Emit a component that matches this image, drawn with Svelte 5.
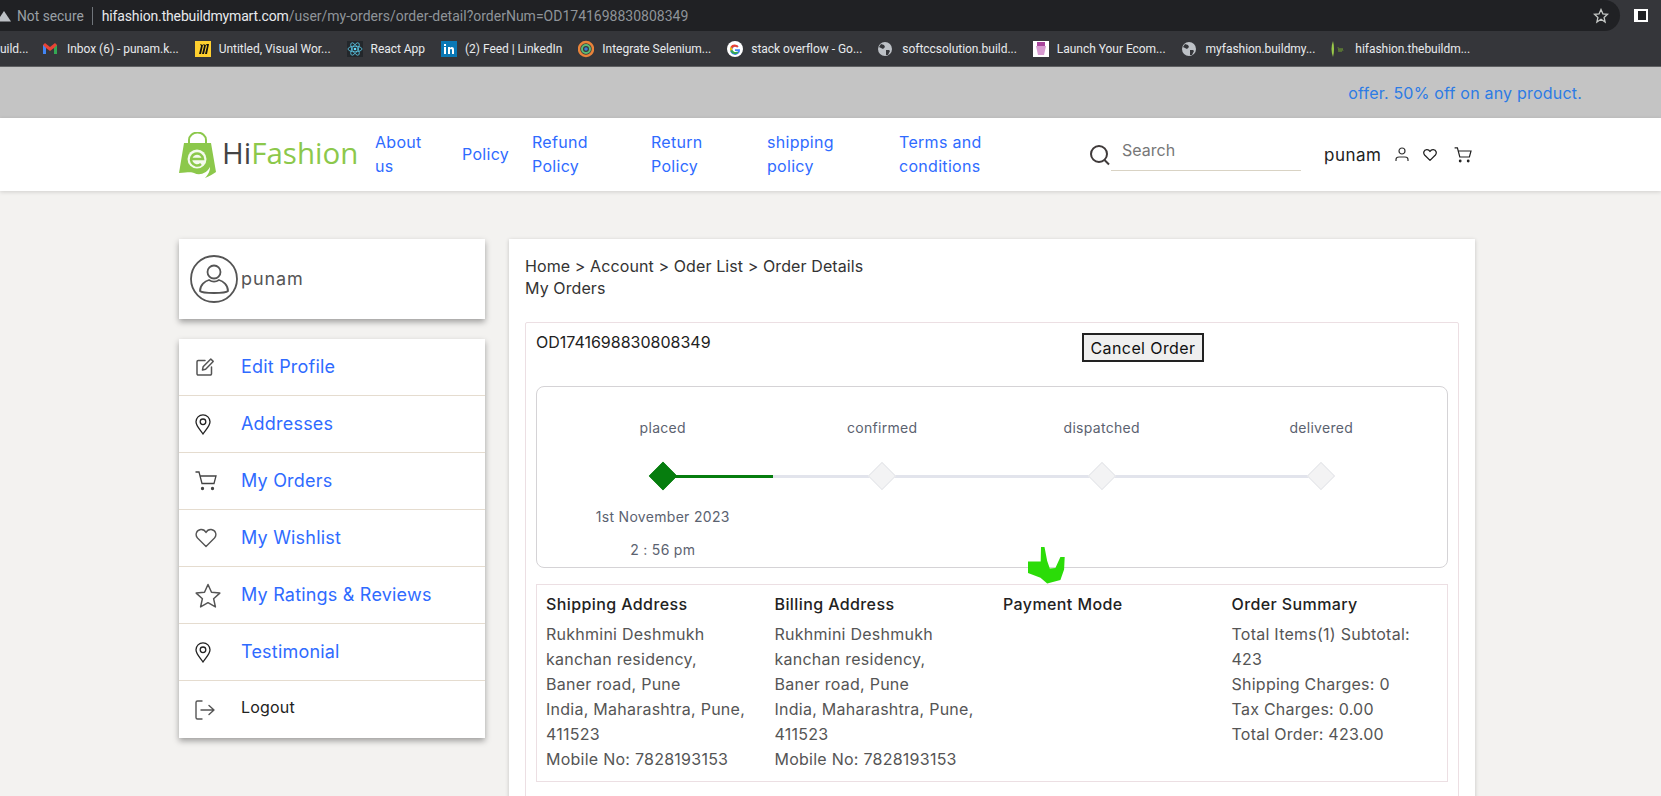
<script>
  const bookmarks = [
    { label: "uild...", icon: "none" },
    { label: "Inbox (6) - punam.k...", icon: "gmail" },
    { label: "Untitled, Visual Wor...", icon: "miro" },
    { label: "React App", icon: "react" },
    { label: "(2) Feed | LinkedIn", icon: "linkedin" },
    { label: "Integrate Selenium...", icon: "ring" },
    { label: "stack overflow - Go...", icon: "google" },
    { label: "softccsolution.build...", icon: "globe" },
    { label: "Launch Your Ecom...", icon: "shop" },
    { label: "myfashion.buildmy...", icon: "globe" },
    { label: "hifashion.thebuildm...", icon: "leaf" },
  ];

  // each entry is the lines of one nav link
  const navLinks = [["About", "us"], ["Policy"], ["Refund", "Policy"], ["Return", "Policy"], ["shipping", "policy"], ["Terms and", "conditions"]];

  const menu = [
    { label: "Edit Profile", icon: "edit" },
    { label: "Addresses", icon: "pin" },
    { label: "My Orders", icon: "cart" },
    { label: "My Wishlist", icon: "heart" },
    { label: "My Ratings & Reviews", icon: "star" },
    { label: "Testimonial", icon: "pin" },
    { label: "Logout", icon: "logout" },
  ];

  const steps = ["placed", "confirmed", "dispatched", "delivered"];

  const address = ["Rukhmini Deshmukh", "kanchan residency,", "Baner road, Pune", "India, Maharashtra, Pune,", "411523", "Mobile No: 7828193153"];
  const summary = ["Total Items(1) Subtotal:", "423", "Shipping Charges: 0", "Tax Charges: 0.00", "Total Order: 423.00"];

  const columns = [
    { title: "Shipping Address", lines: address },
    { title: "Billing Address", lines: address },
    { title: "Payment Mode", lines: [] },
    { title: "Order Summary", lines: summary },
  ];
</script>

{#snippet icon(name)}
  {#if name === "edit"}
    <svg width="20" height="20" viewBox="0 0 20 20" fill="none" stroke="#555" stroke-width="1.5" stroke-linejoin="round" stroke-linecap="round">
      <path d="M10 3.5H3.2A1.2 1.2 0 0 0 2 4.7v12.1A1.2 1.2 0 0 0 3.2 18h12.1a1.2 1.2 0 0 0 1.2-1.2V10" />
      <path d="M7.5 13l.6-3.2L15.800 2l2.400 2.400-7.600 7.900z" />
    </svg>
  {:else if name === "pin"}
    <svg width="16" height="21" viewBox="0 0 16 21" fill="none" stroke="#222" stroke-width="1.3">
      <path d="M8 20C5 15.500 1 12 1 7.800a7 7 0 0 1 14 0C15 12 11 15.500 8 20z" />
      <circle cx="8" cy="7.800" r="2.800" />
    </svg>
  {:else if name === "cart"}
    <svg width="22" height="20" viewBox="0 0 22 20" fill="none" stroke="#444" stroke-width="1.300">
      <path d="M0.500 1H4l3 11.500h12L21 5H5" />
      <circle cx="7.500" cy="17.500" r="1" fill="#444" />
      <circle cx="17.500" cy="17.500" r="1" fill="#444" />
    </svg>
  {:else if name === "heart"}
    <svg width="22" height="20" viewBox="0 0 22 20" fill="none" stroke="#555" stroke-width="1.400" stroke-linejoin="round">
      <path d="M11 18.500L2.500 10C0 7.200 1 2 5.800 1.500 8 1.300 10 2.500 11 4.500 12 2.500 14 1.300 16.200 1.500 21 2 22 7.200 19.500 10z" />
    </svg>
  {:else if name === "star"}
    <svg width="26" height="25" viewBox="0 0 26 25" fill="none" stroke="#555" stroke-width="1.500" stroke-linejoin="round">
      <path d="M13 1.500l3.500 7.700 8.300.9-6.200 5.600 1.800 8.200L13 19.700l-7.400 4.200 1.800-8.200L1.200 10.100l8.300-.9z" />
    </svg>
  {:else if name === "logout"}
    <svg width="20" height="20" viewBox="0 0 20 20" fill="none" stroke="#555" stroke-width="1.400" stroke-linecap="round" stroke-linejoin="round">
      <path d="M7 1H2.500A1.500 1.500 0 0 0 1 2.500v15A1.500 1.500 0 0 0 2.500 19H7" />
      <path d="M6 10h13M14 5.500L19 10l-5 4.500" />
    </svg>
  {/if}
{/snippet}

{#snippet favicon(name)}
  {#if name === "gmail"}
    <svg width="14" height="12" viewBox="0 0 14 12"><path d="M0 2v9h3V5l4 3 4-3v6h3V2L12 0 7 4 2 0z" fill="#ea4335" /><path d="M11 5v6h3V2z" fill="#34a853" /><path d="M0 2v9h3V5z" fill="#4285f4" /></svg>
  {:else if name === "miro"}
    <svg width="16" height="16" viewBox="0 0 16 16"><rect width="16" height="16" fill="#ffd02f" /><path d="M5 3l1 2-2 8h2l2-9zM8 3l1 2-2 8h2l2-9zM11 3l1 2-2 8h2l2-10z" fill="#111" /></svg>
  {:else if name === "react"}
    <svg width="16" height="16" viewBox="0 0 16 16"><rect width="16" height="16" fill="#23272b" /><g fill="none" stroke="#61dafb" stroke-width=".7"><ellipse cx="8" cy="8" rx="7" ry="2.800" /><ellipse cx="8" cy="8" rx="7" ry="2.800" transform="rotate(60 8 8)" /><ellipse cx="8" cy="8" rx="7" ry="2.800" transform="rotate(120 8 8)" /></g><circle cx="8" cy="8" r="1.300" fill="#61dafb" /></svg>
  {:else if name === "linkedin"}
    <svg width="16" height="16" viewBox="0 0 16 16"><rect width="16" height="16" fill="#0a78b5" /><path d="M3 6h2v7H3zM3 3h2v2H3zM7 6h2v1c1-1.500 4-1.500 4 1.500V13h-2V9c0-1.500-2-1.500-2 0v4H7z" fill="#fff" /></svg>
  {:else if name === "ring"}
    <svg width="16" height="18" viewBox="0 0 16 18"><circle cx="8" cy="9" r="7" fill="none" stroke="#e8833a" stroke-width="2.500" /><circle cx="8" cy="9" r="4" fill="none" stroke="#5bb974" stroke-width="2" /><circle cx="8" cy="9" r="1.800" fill="#3b7dd8" /></svg>
  {:else if name === "google"}
    <svg width="16" height="16" viewBox="0 0 16 16"><circle cx="8" cy="8" r="8" fill="#fff" /><path d="M13 8.200H8v1.800h3a3 3 0 1 1-.8-3.400l1.300-1.300A5 5 0 1 0 13 8.200z" fill="#4285f4" /><path d="M3.500 5.700A5 5 0 0 1 11.500 5.300l-1.300 1.300a3 3 0 0 0-4.900 1z" fill="#ea4335" /><path d="M3.500 5.700l1.800 1.900a3 3 0 0 0 0 1l-1.800 1.700a5 5 0 0 1 0-4.600z" fill="#fbbc05" /><path d="M3.500 10.300l1.800-1.700A3 3 0 0 0 10 10.500l1.500 1.200a5 5 0 0 1-8-1.400z" fill="#34a853" /></svg>
  {:else if name === "globe"}
    <svg width="14" height="14" viewBox="0 0 14 14"><circle cx="7" cy="7" r="7" fill="#bdc1c6" /><path d="M3 2l3 1 1 2-2 2-2-1-2-1zM8 8l3 0 1 1-2 4-2 0z" fill="#35363a" /></svg>
  {:else if name === "shop"}
    <svg width="16" height="16" viewBox="0 0 16 16"><rect width="16" height="16" fill="#fff" /><rect x="4" y="1" width="8" height="4" fill="#a8459c" /><path d="M3 5h10l-2 9H5z" fill="#d79ad0" /></svg>
  {:else if name === "leaf"}
    <svg width="16" height="18" viewBox="0 0 16 18"><path d="M2 1q-3 8 0 16 2-8 0-16z" fill="#9ccc4a" /><path d="M7 7l1 5 1-4 1 4 1-4 1 3" fill="none" stroke="#5c7a34" /></svg>
  {/if}
{/snippet}

<div class="page">
  <div class="chrome">
    <div class="addressRow">
      <div class="omnibox">
        <svg class="warn" width="12" height="12" viewBox="0 0 12 12"><path d="M4 1L11 11.500H-3z" fill="#bdc1c6" /></svg>
        <span class="notSecure">Not secure</span>
        <span class="sep"></span>
        <span class="host">hifashion.thebuildmymart.com</span><span class="path">/user/my-orders/order-detail?orderNum=OD1741698830808349</span>
        <svg class="bookmarkStar" width="16" height="16" viewBox="0 0 16 16" fill="none" stroke="#c4c7c5" stroke-width="1.300"><path d="M8 1.500l1.900 4.300 4.600.5-3.400 3.100 1 4.600L8 11.200l-4.100 2.800 1-4.600L1.500 6.300l4.600-.5z" /></svg>
      </div>
      <div class="sidePanel"><span></span></div>
    </div>
    <div class="bookmarks">
      {#each bookmarks as b}
        <div class="bookmark">
          {#if b.icon !== "none"}
            <span class="fav">{@render favicon(b.icon)}</span>
          {/if}
          <span>{b.label}</span>
        </div>
      {/each}
    </div>
  </div>

  <div class="offer">offer. 50% off on any product.</div>

  <header>
    <div class="logo">
      <svg width="37" height="46" viewBox="0 0 37 46">
        <path d="M10 13V8a8 7 0 0 1 17 0v5" fill="none" stroke="#8cc84b" stroke-width="2" />
        <path d="M5 11h27l5 29c-3 2-6 4-11 6 4-4 5-8 5-11-3 6-10 9-16 6-2-1-5-1-15 0z" fill="#8cc84b" />
        <circle cx="18" cy="27" r="9.500" fill="#fff" opacity=".9" />
        <path d="M12 27h12a6 6 0 1 0-2 5" fill="none" stroke="#8cc84b" stroke-width="2.500" />
      </svg>
      <div class="wordmark"><span class="hi">Hi</span><span class="fashion">Fashion</span></div>
    </div>
    <nav>
      {#each navLinks as link}
        <a href="#top">
          {#each link as part}
            <span>{part}</span>
          {/each}
        </a>
      {/each}
    </nav>
    <div class="search">
      <svg width="22" height="22" viewBox="0 0 22 22" fill="none" stroke="#3f3a3a" stroke-width="2"><circle cx="10" cy="10" r="8" /><path d="M15.500 16l4.500 4.500" /></svg>
      <span class="searchField">Search</span>
    </div>
    <div class="userBox">
      <span class="userName">punam</span>
      <svg width="14" height="15" viewBox="0 0 14 15" fill="none" stroke="#333" stroke-width="1.200"><circle cx="7" cy="4" r="3" /><path d="M1 14v-1.500Q1 10 4 10h6q3 0 3 2.500V14" /></svg>
      <svg width="14" height="14" viewBox="0 0 22 20" fill="none" stroke="#222" stroke-width="2" stroke-linejoin="round"><path d="M11 18.500L2.500 10C0 7.200 1 2 5.800 1.500 8 1.300 10 2.500 11 4.500 12 2.500 14 1.300 16.200 1.500 21 2 22 7.200 19.500 10z" /></svg>
      <svg class="userCart" width="18" height="16" viewBox="0 0 22 20" fill="none" stroke="#222" stroke-width="1.500"><path d="M0.500 1H4l3 11.500h12L21 5H5" /><circle cx="7.500" cy="17.500" r="1" fill="#222" /><circle cx="17.500" cy="17.500" r="1" fill="#222" /></svg>
    </div>
  </header>

  <main>
    <aside>
      <div class="card profile">
        <svg width="48" height="48" viewBox="0 0 48 48" fill="none" stroke="#555" stroke-width="1.800">
          <circle cx="24" cy="24" r="23" />
          <circle cx="24" cy="17" r="6.500" />
          <path d="M10 36c0-6 5-10 9-11 3 2 7 2 10 0 4 1 9 5 9 11-1 1-8 2-14 2s-13-1-14-2z" stroke-linejoin="round" />
        </svg>
        <span>punam</span>
      </div>
      <ul class="card menu">
        {#each menu as item}
          <li>
            <span class="menuIcon">{@render icon(item.icon)}</span>
            <a href="#top" class:logout={item.icon === "logout"}>{item.label}</a>
          </li>
        {/each}
      </ul>
    </aside>

    <section class="content">
      <div class="crumbs">Home &gt; Account &gt; Oder List &gt; Order Details</div>
      <div class="crumbs">My Orders</div>

      <div class="order">
        <div class="orderHead">
          <span class="orderNum">OD1741698830808349</span>
          <button>Cancel Order</button>
        </div>

        <div class="tracker">
          {#each steps as step, i}
            <div class="step">
              <div class="stepLabel">{step}</div>
              <div class="node">
                {#if i < steps.length - 1}
                  <span class="connector" class:started={i === 0}></span>
                {/if}
                <span class="diamond" class:done={i === 0}></span>
              </div>
              {#if i === 0}
                <div class="stepDate">1st November 2023</div>
                <div class="stepDate">2 : 56 pm</div>
              {/if}
            </div>
          {/each}
        </div>

        <div class="details">
          {#each columns as col}
            <div>
              <h4>{col.title}</h4>
              {#each col.lines as line}
                <div class="line">{line}</div>
              {/each}
            </div>
          {/each}
        </div>

        <svg class="scribble" width="40" height="40" viewBox="0 0 40 40">
          <path d="M13 0h3.500l2.700 14 2.600 7.500 5.600-.6 5-10.900h4.300l-.6 12.500-3.700 10.500-13.200 3.500-6.700-5.700L0 26V14.500h12.700z" fill="#2bdc08" />
        </svg>
      </div>
    </section>
  </main>
</div>

<style>
  :global(body) {
    margin: 0;
    background: #f3f2f0;
  }

  .page {
    height: 796px;
    overflow: hidden;
    font-family: Inter, "Liberation Sans", sans-serif;
    background: #f3f2f0;
  }

  .chrome {
    background: #35363a;
    border-bottom: 1px solid #5f6062;
    font-family: Roboto, "Liberation Sans", sans-serif;
  }

  .addressRow {
    height: 31px;
    display: flex;
  }

  .omnibox {
    flex: 1;
    background: #202124;
    border-radius: 0 16px 16px 0;
    display: flex;
    align-items: center;
    font-size: 14px;
    white-space: nowrap;
  }

  .warn {
    flex: none;
  }

  .notSecure {
    margin-left: 5px;
    color: #9aa0a6;
    font-size: 13.800px;
  }

  .sep {
    width: 1px;
    height: 18px;
    background: #70757a;
    margin: 0 9px 0 8px;
  }

  .host {
    color: #e8eaed;
    letter-spacing: -0.15px;
  }

  .path {
    color: #8f9499;
  }

  .bookmarkStar {
    margin-left: auto;
    margin-right: 11px;
  }

  .sidePanel {
    width: 41px;
    display: flex;
    align-items: center;
    justify-content: center;
  }

  .sidePanel span {
    width: 8px;
    height: 9px;
    border: 2px solid #fff;
    border-left-width: 4px;
    background: #202124;
  }

  .bookmarks {
    height: 35px;
    display: flex;
    align-items: center;
    gap: 16px;
    color: #e8eaed;
    font-size: 12px;
    letter-spacing: -0.03px;
    white-space: nowrap;
    overflow: hidden;
  }

  .bookmark {
    display: flex;
    align-items: center;
    gap: 8px;
  }

  .bookmark:first-child {
    width: 27px;
  }

  .fav {
    width: 16px;
    display: flex;
    align-items: center;
  }

  .offer {
    height: 51px;
    background: #c4c4c4;
    color: #2c7be5;
    font-size: 16px;
    letter-spacing: 0.2px;
    display: flex;
    align-items: center;
    justify-content: flex-end;
    padding-right: 79px;
  }

  header {
    height: 73px;
    background: #fff;
    box-shadow: 0 1px 4px rgba(0, 0, 0, 0.15);
    display: flex;
    align-items: center;
    padding-left: 179px;
  }

  .logo {
    width: 196px;
    flex: none;
    display: flex;
    align-items: center;
    font-family: "Open Sans", sans-serif;
    font-size: 29.500px;
  }

  .logo svg {
    margin-right: 6px;
  }

  .wordmark {
    margin-bottom: 4px;
  }

  .hi {
    color: #444;
  }

  .fashion {
    color: #8cc84b;
  }

  nav {
    display: grid;
    grid-template-columns: 87px 70px 119px 116px 132px 190px;
    align-items: center;
    line-height: 24px;
    font-size: 16px;
    letter-spacing: 0.3px;
    margin-top: -2px;
  }

  nav a {
    color: #2f6bff;
    text-decoration: none;
  }

  nav a span {
    display: block;
  }

  .search {
    display: flex;
    align-items: center;
    width: 235px;
    flex: none;
  }

  .searchField {
    width: 179px;
    padding: 0 0 10px 11px;
    margin-top: 2px;
    border-bottom: 1px solid #d9d3c4;
    color: #777;
    font-size: 16px;
  }

  .userBox {
    display: flex;
    align-items: center;
    gap: 14px;
    color: #222;
    font-size: 17px;
    letter-spacing: 0.5px;
  }

  .userCart {
    margin-left: 3px;
  }

  main {
    display: flex;
    gap: 24px;
    padding: 48px 0 0 179px;
  }

  aside {
    width: 306px;
    flex: none;
  }

  .card {
    background: #fff;
    box-shadow: 0 3px 6px rgba(0, 0, 0, 0.35);
  }

  .profile {
    height: 80px;
    display: flex;
    align-items: center;
    padding-left: 11px;
    color: #555;
    font-size: 18px;
    letter-spacing: 0.9px;
    box-sizing: border-box;
  }

  .profile span {
    margin: 0 0 2px 3px;
  }

  .menu {
    list-style: none;
    margin: 20px 0 0;
    padding: 0;
  }

  .menu li {
    height: 57px;
    box-sizing: border-box;
    display: flex;
    align-items: center;
    border-bottom: 1px solid #e5dccf;
  }

  .menu li:last-child {
    border-bottom: 0;
  }

  .menuIcon {
    width: 62px;
    padding-left: 16px;
    box-sizing: border-box;
    display: flex;
  }

  .menu a {
    color: #2f6bff;
    font-size: 18px;
    letter-spacing: 0.2px;
    margin-bottom: 2px;
    text-decoration: none;
  }

  .menu a.logout {
    color: #222;
    font-size: 16px;
    margin-bottom: 6px;
  }

  .content {
    width: 966px;
    box-sizing: border-box;
    background: #fff;
    padding: 16px 16px 0;
    box-shadow: 0 1px 4px rgba(0, 0, 0, 0.2);
    color: #333;
    height: 600px;
  }

  .crumbs {
    font-size: 16px;
    line-height: 22px;
    letter-spacing: 0.1px;
  }

  .order {
    position: relative;
    margin-top: 23px;
    border: 1px solid #ecdfe3;
    border-radius: 2px;
    padding: 0 10px;
    height: 500px;
  }

  .orderHead {
    height: 63px;
    display: flex;
    color: #222;
    font-size: 16px;
  }

  .orderNum {
    width: 546px;
    padding-top: 9px;
  }

  button {
    align-self: flex-start;
    margin-top: 10px;
    width: 122px;
    height: 29px;
    padding: 0;
    font: inherit;
    letter-spacing: 0.4px;
    color: #111;
    background: #efefef;
    border: 2px solid #222;
  }

  .tracker {
    height: 182px;
    box-sizing: border-box;
    border: 1px solid #d5d3d6;
    border-radius: 8px;
    padding: 0 16px;
    display: grid;
    grid-template-columns: repeat(4, 219.500px);
  }

  .step {
    text-align: center;
    color: #5b6270;
    font-size: 14px;
    letter-spacing: 0.3px;
  }

  .stepLabel {
    padding-top: 31px;
    line-height: 20px;
  }

  .node {
    position: relative;
    height: 28px;
    margin-top: 24px;
    display: flex;
    justify-content: center;
    align-items: center;
  }

  .connector {
    position: absolute;
    left: 50%;
    width: 100%;
    height: 3px;
    background: #e2e4ec;
  }

  .connector.started {
    background: linear-gradient(to right, #067d0e 50%, #e2e4ec 50%);
  }

  .diamond {
    position: relative;
    width: 18px;
    height: 18px;
    background: #f3f3f4;
    border: 1px solid #e6e7eb;
    transform: rotate(45deg);
  }

  .diamond.done {
    background: #067d0e;
    border-color: #067d0e;
  }

  .stepDate {
    margin-top: 13px;
    line-height: 20px;
  }

  .node + .stepDate {
    margin-top: 17px;
  }

  .details {
    margin-top: 16px;
    height: 198px;
    box-sizing: border-box;
    border: 1px solid #ecdfe3;
    padding: 8px 9px 0;
    display: grid;
    grid-template-columns: repeat(4, 228.500px);
    color: #555;
    font-size: 16px;
  }

  h4 {
    margin: 0 0 7px;
    font-size: 16px;
    font-weight: 500;
    line-height: 22px;
    letter-spacing: 0.4px;
    color: #222;
  }

  .line {
    line-height: 25.100px;
    letter-spacing: 0.25px;
    white-space: nowrap;
  }

  .scribble {
    position: absolute;
    left: 502px;
    top: 224px;
  }
</style>
